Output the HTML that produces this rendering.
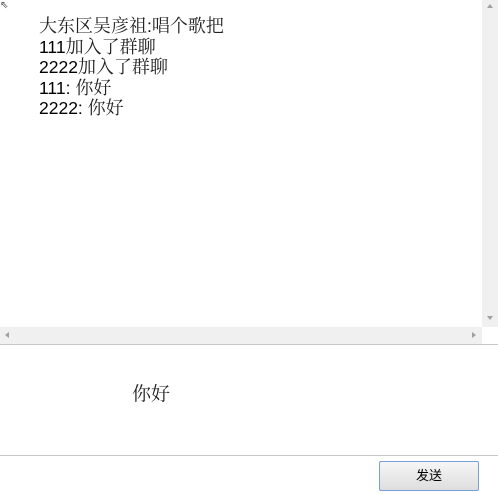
<!DOCTYPE html>
<html><head><meta charset="utf-8"><style>
body{margin:0;width:498px;height:494px;background:#fff;position:relative;overflow:hidden;font-family:"Liberation Sans","Noto Sans CJK SC",sans-serif;}
.msgs{position:absolute;left:39px;top:15px;font-size:17.5px;line-height:20.6px;color:#000;}
.msgs div{height:20.6px;white-space:nowrap;}
.c{font-family:"Noto Serif CJK SC","Noto Sans CJK SC",serif;font-size:18px;color:#222;}
.vs{position:absolute;left:482px;top:0;width:16px;height:327px;background:#f0f0f0;}
.hs{position:absolute;left:0;top:327px;width:482px;height:17px;background:#f0f0f0;}
.l1{position:absolute;left:0;top:344px;width:498px;height:1px;background:#c8c8c8;}
.l2{position:absolute;left:0;top:455px;width:498px;height:1px;background:#c8c8c8;}
.inp{position:absolute;left:132px;top:379px;font-size:19px;color:#222;font-family:"Noto Serif CJK SC",serif;}
.btn{position:absolute;left:379px;top:461px;width:98px;height:28px;border:1px solid #7a9fd8;border-radius:2px;background:linear-gradient(#f6f6f6,#dedede);font-size:13px;text-align:center;line-height:28px;color:#000;}
.tri{position:absolute;width:0;height:0;}
</style></head><body>
<div style="position:absolute;left:0;top:0;font-size:10px;color:#444">⇖</div>
<div class="msgs">
<div><span class="c">大东区吴彦祖</span>:<span class="c">唱个歌把</span></div>
<div>111<span class="c">加入了群聊</span></div>
<div>2222<span class="c">加入了群聊</span></div>
<div>111: <span class="c">你好</span></div>
<div>2222: <span class="c">你好</span></div>
</div>
<div class="vs"></div>
<div class="tri" style="left:487px;top:4px;border-left:3px solid transparent;border-right:3px solid transparent;border-bottom:4px solid #a0a0a0"></div>
<div class="tri" style="left:487px;top:316px;border-left:3px solid transparent;border-right:3px solid transparent;border-top:4px solid #a0a0a0"></div>
<div class="hs"></div>
<div class="tri" style="left:5px;top:332px;border-top:3px solid transparent;border-bottom:3px solid transparent;border-right:4px solid #a0a0a0"></div>
<div class="tri" style="left:472px;top:332px;border-top:3px solid transparent;border-bottom:3px solid transparent;border-left:4px solid #a0a0a0"></div>
<div class="l1"></div>
<div class="inp">你好</div>
<div class="l2"></div>
<div class="btn">发送</div>
</body></html>
